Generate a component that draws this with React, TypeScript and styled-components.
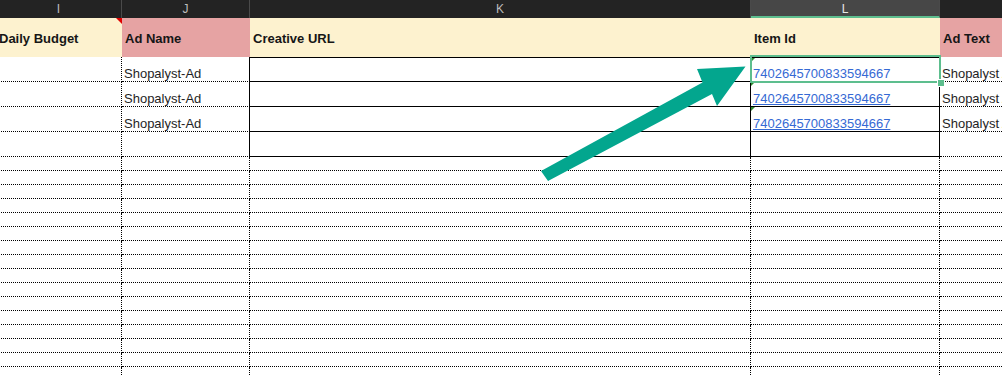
import styled, {createGlobalStyle} from 'styled-components';

const GlobalStyle = createGlobalStyle`
  html, body {
    margin: 0;
    padding: 0;
    background: #ffffff;
    overflow: hidden;
  }
  body {
    font-family: "Liberation Sans", Arial, sans-serif;
  }
`

type Tone = 'cream' | 'pink'

const columns: {letter: string, title: string, tone: Tone, active?: boolean, note?: boolean}[] = [
    {letter: 'I', title: 'Daily Budget', tone: 'cream', note: true},
    {letter: 'J', title: 'Ad Name', tone: 'pink'},
    {letter: 'K', title: 'Creative URL', tone: 'cream'},
    {letter: 'L', title: 'Item Id', tone: 'cream', active: true},
    {letter: 'M', title: 'Ad Text', tone: 'pink'},
]

const template = '126px 128px 501px 189px 200px'

const itemId = '7402645700833594667'

// cells with solid borders: columns K, L on the first four data rows
const isBoxed = (row: number, col: number) => row < 4 && (col === 2 || col === 3)

const rows = Array.from({length: 20}, (_, i) => ({
    adName: i < 3 ? 'Shopalyst-Ad' : '',
    itemId: i < 3 ? itemId : '',
    adText: i < 3 ? 'Shopalyst Ad Text' : '',
    tall: i < 4,
}))

export default function App() {
    return (
        <Frame>
            <GlobalStyle/>
            <Sheet>
                <LetterBar>
                    {columns.map(col => (
                        <Letter key={col.letter} $active={col.active}>{col.letter}</Letter>
                    ))}
                </LetterBar>
                <HeaderRow>
                    {columns.map(col => (
                        <HeaderCell key={col.title} $tone={col.tone} $note={col.note}>
                            {col.title}
                        </HeaderCell>
                    ))}
                </HeaderRow>
                {rows.map((row, r) => (
                    <DataRow key={r} $tall={row.tall}>
                        {[ '', row.adName, '', row.itemId, row.adText ].map((value, c) => (
                            <Cell key={c}
                                  $solidTop={r === 0 && isBoxed(r, c)}
                                  $solidRight={isBoxed(r, c) || isBoxed(r, c + 1)}
                                  $solidBottom={isBoxed(r, c)}
                                  $flag={c === 3 && value !== ''}>
                                {c === 3 && value
                                    ? <IdLink $plain={r === 0}>{value}</IdLink>
                                    : value}
                            </Cell>
                        ))}
                    </DataRow>
                ))}
            </Sheet>
            <Selection>
                <Handle/>
            </Selection>
            <Arrow viewBox="535 60 215 125">
                <polygon
                    points="541,171 548,181 712,94 717,106 745.5,66.5 697,69 702.5,82.5"
                    fill="#03a68e"/>
            </Arrow>
        </Frame>
    );
}

const Frame = styled.div`
  position: relative;
  width: 1002px;
  height: 376px;
  overflow: hidden;
`

const Sheet = styled.div`
  display: flex;
  flex-direction: column;
  margin-left: -4px;
`

const LetterBar = styled.div`
  display: grid;
  grid-template-columns: ${template};
  height: 18px;
  background-color: #232323;
`

const Letter = styled.div<{$active?: boolean}>`
  box-sizing: border-box;
  display: flex;
  justify-content: center;
  align-items: center;
  border-right: 1px solid #4a4a4a;
  font-size: 12px;
  color: ${p => p.$active ? '#e8e8e8' : '#bdbdbd'};
  background-color: ${p => p.$active ? '#474747' : 'transparent'};
  border-bottom: ${p => p.$active ? '2px solid #5dbe8e' : 'none'};
  padding-top: ${p => p.$active ? '2px' : '0'};
`

const HeaderRow = styled.div`
  display: grid;
  grid-template-columns: ${template};
  height: 39px;
`

const HeaderCell = styled.div<{$tone: Tone, $note?: boolean}>`
  position: relative;
  display: flex;
  align-items: center;
  padding: 1px 0 0 3px;
  white-space: nowrap;
  overflow: hidden;
  font-size: 13px;
  font-weight: 700;
  color: #161616;
  background-color: ${p => p.$tone === 'pink' ? '#e6a3a3' : '#fdf2cf'};

  &::after {
    content: '';
    display: ${p => p.$note ? 'block' : 'none'};
    position: absolute;
    top: 0;
    right: 0;
    border-top: 6px solid #e00000;
    border-left: 6px solid transparent;
  }
`

const DataRow = styled.div<{$tall?: boolean}>`
  display: grid;
  grid-template-columns: ${template};
  height: ${p => p.$tall ? '25px' : '14px'};
`

const Cell = styled.div<{$solidTop?: boolean, $solidRight?: boolean, $solidBottom?: boolean, $flag?: boolean}>`
  position: relative;
  box-sizing: border-box;
  display: flex;
  align-items: flex-end;
  padding: 0 0 0 2px;
  white-space: nowrap;
  overflow: hidden;
  font-size: 13px;
  line-height: 15px;
  color: #1e1e1e;
  border-top: ${p => p.$solidTop ? '1px solid #000' : 'none'};
  border-right: 1px ${p => p.$solidRight ? 'solid' : 'dotted'} #000;
  border-bottom: 1px ${p => p.$solidBottom ? 'solid' : 'dotted'} #000;

  &::before {
    content: '';
    display: ${p => p.$flag ? 'block' : 'none'};
    position: absolute;
    top: 0;
    left: 0;
    border-top: 4px solid #2f8a2f;
    border-right: 4px solid transparent;
  }
`

const IdLink = styled.span<{$plain?: boolean}>`
  color: #3569d4;
  text-decoration: ${p => p.$plain ? 'none' : 'underline'};
  text-underline-offset: 1px;
`

const Selection = styled.div`
  position: absolute;
  left: 750px;
  top: 55px;
  width: 187px;
  height: 24px;
  border: 2px solid #5dbe8e;
`

const Handle = styled.div`
  position: absolute;
  right: -6px;
  bottom: -6px;
  width: 6px;
  height: 6px;
  background-color: #5dbe8e;
  border: 1px solid #ffffff;
`

const Arrow = styled.svg`
  position: absolute;
  left: 535px;
  top: 60px;
  width: 215px;
  height: 125px;
  pointer-events: none;
`
